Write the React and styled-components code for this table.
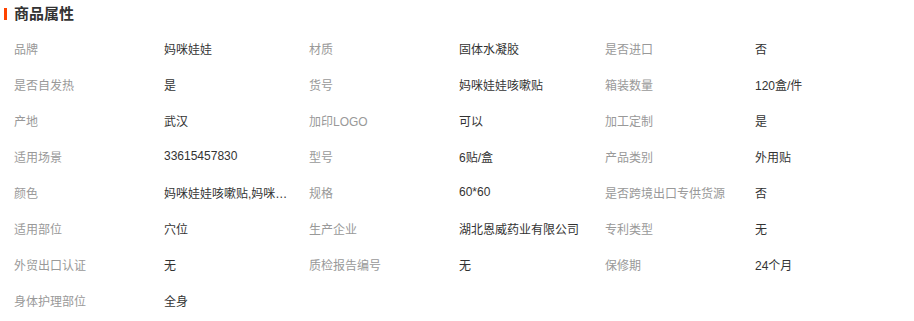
import React from "react";
import styled, { createGlobalStyle } from "styled-components";

const GlobalStyle = createGlobalStyle`
  body {
    margin: 0;
    background: #fff;
    font-family: "Liberation Sans", "Noto Sans CJK SC", sans-serif;
  }
`;

const Panel = styled.section`
  width: 914px;
  padding: 0 0 0 4px;
  box-sizing: border-box;
`;

const Header = styled.div`
  display: flex;
  align-items: center;
  height: 28px;
  gap: 7px;
`;

const Bar = styled.span`
  display: block;
  width: 3px;
  height: 12px;
  background: #ff4400;
`;

const Title = styled.h3`
  margin: 0;
  font-size: 15px;
  font-weight: 700;
  color: #333;
  line-height: 28px;
`;

const Grid = styled.ul`
  list-style: none;
  margin: 2px 0 0;
  padding: 0 0 0 10px;
  display: grid;
  grid-template-columns: 295px 296px 1fr;
`;

const Item = styled.li`
  display: flex;
  height: 36px;
  align-items: center;
  font-size: 12px;
`;

const Label = styled.span`
  width: 150px;
  flex-shrink: 0;
  color: #999;
  white-space: nowrap;
`;

const Value = styled.span`
  width: 128px;
  color: #333;
  white-space: nowrap;
  overflow: hidden;
  text-overflow: ellipsis;
`;

const attrs = [
  ["品牌", "妈咪娃娃"],
  ["材质", "固体水凝胶"],
  ["是否进口", "否"],
  ["是否自发热", "是"],
  ["货号", "妈咪娃娃咳嗽贴"],
  ["箱装数量", "120盒/件"],
  ["产地", "武汉"],
  ["加印LOGO", "可以"],
  ["加工定制", "是"],
  ["适用场景", "33615457830"],
  ["型号", "6贴/盒"],
  ["产品类别", "外用贴"],
  ["颜色", "妈咪娃娃咳嗽贴,妈咪娃娃咳嗽贴"],
  ["规格", "60*60"],
  ["是否跨境出口专供货源", "否"],
  ["适用部位", "穴位"],
  ["生产企业", "湖北恩威药业有限公司"],
  ["专利类型", "无"],
  ["外贸出口认证", "无"],
  ["质检报告编号", "无"],
  ["保修期", "24个月"],
  ["身体护理部位", "全身"],
];

export default function App() {
  return (
    <>
      <GlobalStyle />
      <Panel>
        <Header>
          <Bar />
          <Title>商品属性</Title>
        </Header>
        <Grid>
          {attrs.map(([label, value]) => (
            <Item key={label}>
              <Label>{label}</Label>
              <Value title={value}>{value}</Value>
            </Item>
          ))}
        </Grid>
      </Panel>
    </>
  );
}
